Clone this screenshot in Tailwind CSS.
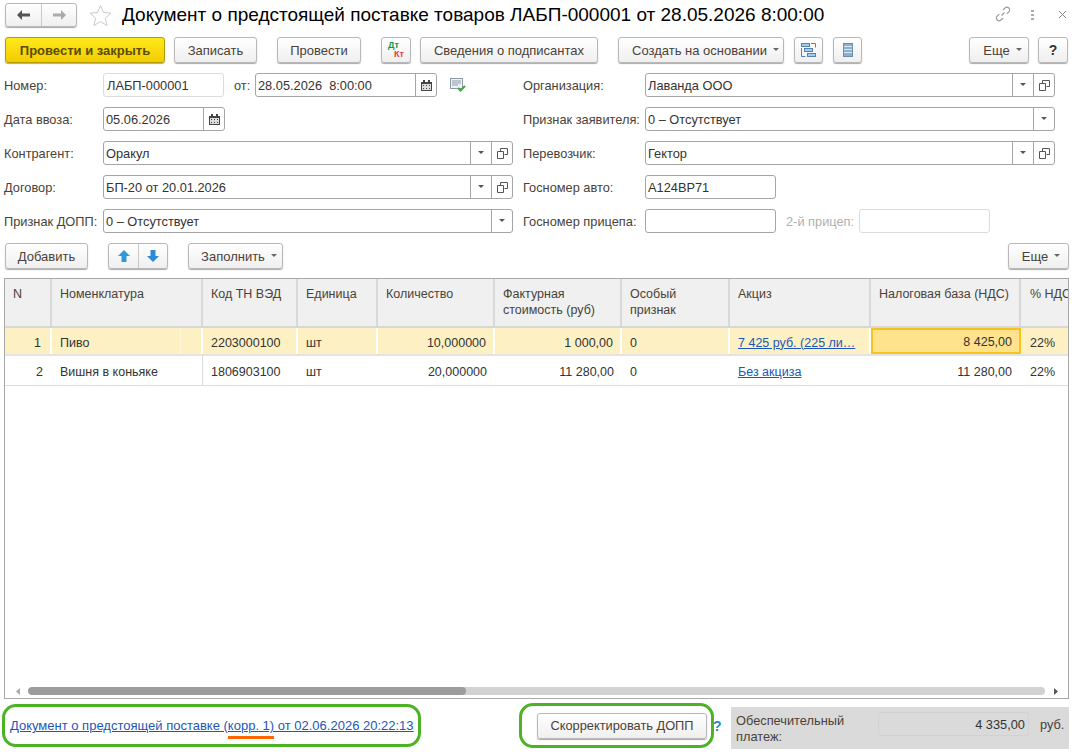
<!DOCTYPE html>
<html lang="ru">
<head>
  <meta charset="UTF-8" />
  <title>Документ о предстоящей поставке товаров</title>
  <script src="https://cdn.jsdelivr.net/npm/@tailwindcss/browser@4"></script>
</head>
<body class="bg-white">
<div class="w-[1082px] h-[756px] overflow-hidden flex flex-col font-['Liberation_Sans',Arial,sans-serif] text-[13px] leading-[15px] text-[#4a4238]">

  <!-- Title bar -->
  <div class="h-[37px] pt-[3px] pl-[5px] flex items-start shrink-0">
    <div class="w-[72px] h-[24px] flex rounded-[3px] border border-[#b8b8b8] bg-linear-to-b from-white to-[#efefef] shadow-[0_1px_1px_#aaa]">
      <div class="w-[36px] flex items-center justify-center border-r border-[#c8c8c8]">
        <svg width="15" height="12" viewBox="0 0 15 12"><path d="M1 6l5-5v3.500h8v3H6V11z" fill="#555"/></svg>
      </div>
      <div class="flex-1 flex items-center justify-center">
        <svg width="15" height="12" viewBox="0 0 15 12"><path d="M14 6L9 1v3.500H1v3h8V11z" fill="#aaa"/></svg>
      </div>
    </div>
    <svg class="ml-[12px] mt-[1px]" width="23" height="23" viewBox="0 0 23 23"><path d="M11.500 1.500l3 7 7.500.7-5.700 5 1.800 7.300-6.600-3.900-6.600 3.900 1.800-7.300-5.700-5 7.500-.7z" fill="none" stroke="#c9c9c9"/></svg>
    <div class="ml-[10px] text-[19px] leading-[24px] text-black whitespace-nowrap">Документ о предстоящей поставке товаров ЛАБП-000001 от 28.05.2026 8:00:00</div>
    <div class="flex-1"></div>
    <svg class="mt-[3px]" width="16" height="16" viewBox="0 0 16 16"><g fill="none" stroke="#999" stroke-width="1.100"><path d="M6.500 9.500l3-3"/><path d="M8 4l2-2a2.600 2.600 0 0 1 3.800 3.800l-2 2"/><path d="M8 12l-2 2a2.600 2.600 0 0 1-3.800-3.800l2-2"/></g></svg>
    <div class="ml-[20px] mt-[7px] w-[3px] flex flex-col gap-[2px]">
      <div class="h-[2px] bg-[#aaa]"></div><div class="h-[2px] bg-[#aaa]"></div><div class="h-[2px] bg-[#aaa]"></div>
    </div>
    <svg class="ml-[24px] mr-[15px] mt-[7px]" width="9" height="9" viewBox="0 0 9 9"><path d="M1 1l7 7M8 1L1 8" stroke="#888" stroke-width="1"/></svg>
  </div>

  <!-- Command bar -->
  <div class="h-[36px] pl-[5px] flex items-start shrink-0">
    <div class="w-[160px] h-[26px] flex items-center justify-center rounded-[3px] border border-[#b39b00] bg-linear-to-b from-[#ffe81a] to-[#f2cd00] shadow-[0_1px_1px_#aaa] font-bold text-[#5b4c00]">Провести и закрыть</div>
    <div class="ml-[9px] w-[83px] h-[26px] flex items-center justify-center rounded-[3px] border border-[#b8b8b8] bg-linear-to-b from-white to-[#efefef] shadow-[0_1px_1px_#aaa]">Записать</div>
    <div class="ml-[20px] w-[84px] h-[26px] flex items-center justify-center rounded-[3px] border border-[#b8b8b8] bg-linear-to-b from-white to-[#efefef] shadow-[0_1px_1px_#aaa]">Провести</div>
    <div class="ml-[20px] w-[30px] h-[26px] relative rounded-[3px] border border-[#b8b8b8] bg-linear-to-b from-white to-[#efefef] shadow-[0_1px_1px_#aaa] font-bold text-[9px] leading-[9px]">
      <span class="absolute left-[6px] top-[3px] text-[#0a9a4a]">Дт</span>
      <span class="absolute left-[12px] top-[12px] text-[#e8383c]">Кт</span>
    </div>
    <div class="ml-[9px] w-[178px] h-[26px] flex items-center justify-center rounded-[3px] border border-[#b8b8b8] bg-linear-to-b from-white to-[#efefef] shadow-[0_1px_1px_#aaa]">Сведения о подписантах</div>
    <div class="ml-[20px] w-[166px] h-[26px] pl-[10px] flex items-center justify-center gap-[6px] rounded-[3px] border border-[#b8b8b8] bg-linear-to-b from-white to-[#efefef] shadow-[0_1px_1px_#aaa]">Создать на основании
      <svg width="7" height="4" viewBox="0 0 7 4"><path d="M0 0h6L3 3z" fill="#666"/></svg>
    </div>
    <div class="ml-[10px] w-[29px] h-[26px] flex items-center justify-center rounded-[3px] border border-[#b8b8b8] bg-linear-to-b from-white to-[#efefef] shadow-[0_1px_1px_#aaa]">
      <svg width="15" height="15" viewBox="0 0 15 15"><g fill="#a9c9e4" stroke="#4f86b3"><rect x=".5" y=".5" width="8" height="3"/><rect x="3.500" y="5.500" width="8" height="3"/><rect x="6.500" y="10.500" width="8" height="3"/></g><path d="M10 .5h4.500v4M.5 5v8.500h4" fill="none" stroke="#4f86b3"/></svg>
    </div>
    <div class="ml-[10px] w-[29px] h-[26px] flex items-center justify-center rounded-[3px] border border-[#b8b8b8] bg-linear-to-b from-white to-[#efefef] shadow-[0_1px_1px_#aaa]">
      <svg width="10" height="14" viewBox="0 0 10 14"><rect x=".5" y=".5" width="9" height="13" fill="#8fb0cc" stroke="#6d8fab"/><path d="M1 3.500h8M1 6.500h8M1 9.500h8" stroke="#dbe7f0"/></svg>
    </div>
    <div class="ml-[107px] w-[60px] h-[26px] pl-[8px] flex items-center justify-center gap-[6px] rounded-[3px] border border-[#b8b8b8] bg-linear-to-b from-white to-[#efefef] shadow-[0_1px_1px_#aaa]">Еще
      <svg width="7" height="4" viewBox="0 0 7 4"><path d="M0 0h6L3 3z" fill="#666"/></svg>
    </div>
    <div class="ml-[9px] w-[30px] h-[26px] flex items-center justify-center rounded-[3px] border border-[#b8b8b8] bg-linear-to-b from-white to-[#efefef] shadow-[0_1px_1px_#aaa] font-bold text-[14px] text-[#333]">?</div>
  </div>

  <!-- Form -->
  <div class="flex flex-col gap-[10px] shrink-0 text-[12.8px]">
    <div class="h-[24px] flex items-center">
      <div class="w-[523px] pl-[4px] flex items-center">
        <div class="w-[99px]">Номер:</div>
        <div class="w-[121px] h-[24px] pl-[3px] flex items-center border border-[#dcdcdc] rounded-[3px] text-[#333]">ЛАБП-000001</div>
        <div class="ml-[10px] w-[21px]">от:</div>
        <div class="w-[182px] h-[24px] flex items-center border border-[#a5a5a5] rounded-[3px] text-[#333]">
          <div class="flex-1 pl-[2px] whitespace-pre">28.05.2026  8:00:00</div>
          <div class="w-[21px] h-full flex items-center justify-center border-l border-[#a5a5a5]">
            <svg width="11" height="11" viewBox="0 0 11 11"><path d="M0 2h11v9H0z" fill="#444"/><path d="M2 0h2v3H2zM7 0h2v3H7z" fill="#444"/><path d="M1 4h9v6H1z" fill="#ddd"/><path d="M2 5h1v1H2zM5 5h1v1H5zM8 5h1v1H8zM2 8h1v1H2zM5 8h1v1H5zM8 8h1v1H8z" fill="#444"/></svg>
          </div>
        </div>
        <svg class="ml-[13px]" width="16" height="14" viewBox="0 0 16 14"><rect x=".5" y=".5" width="12" height="10" fill="#eef2f5" stroke="#8b9ba8"/><path d="M2 3h9M2 5h9M2 7h6" stroke="#8b9ba8"/><path d="M8 10l2.500 2.500L15 8" fill="none" stroke="#3eaa3e" stroke-width="2"/></svg>
      </div>
      <div class="w-[122px]">Организация:</div>
      <div class="w-[410px] h-[24px] flex items-center border border-[#a5a5a5] rounded-[3px] text-[#333]">
        <div class="flex-1 pl-[2px]">Лаванда ООО</div>
        <div class="w-[21px] h-full flex items-center justify-center border-l border-[#a5a5a5]"><svg width="7" height="4" viewBox="0 0 7 4"><path d="M0 0h6L3 3z" fill="#555"/></svg></div>
        <div class="w-[21px] h-full flex items-center justify-center border-l border-[#a5a5a5]"><svg width="11" height="11" viewBox="0 0 11 11"><path d="M3.500 3.500V.5h7v6h-3M.5 3.500h6v7H.5z" fill="none" stroke="#555"/></svg></div>
      </div>
    </div>

    <div class="h-[24px] flex items-center">
      <div class="w-[523px] pl-[4px] flex items-center">
        <div class="w-[99px]">Дата ввоза:</div>
        <div class="w-[122px] h-[24px] flex items-center border border-[#a5a5a5] rounded-[3px] text-[#333]">
          <div class="flex-1 pl-[2px]">05.06.2026</div>
          <div class="w-[21px] h-full flex items-center justify-center border-l border-[#a5a5a5]">
            <svg width="11" height="11" viewBox="0 0 11 11"><path d="M0 2h11v9H0z" fill="#444"/><path d="M2 0h2v3H2zM7 0h2v3H7z" fill="#444"/><path d="M1 4h9v6H1z" fill="#ddd"/><path d="M2 5h1v1H2zM5 5h1v1H5zM8 5h1v1H8zM2 8h1v1H2zM5 8h1v1H5zM8 8h1v1H8z" fill="#444"/></svg>
          </div>
        </div>
      </div>
      <div class="w-[122px] whitespace-nowrap">Признак заявителя:</div>
      <div class="w-[410px] h-[24px] flex items-center border border-[#a5a5a5] rounded-[3px] text-[#333]">
        <div class="flex-1 pl-[2px]">0 – Отсутствует</div>
        <div class="w-[21px] h-full flex items-center justify-center border-l border-[#a5a5a5]"><svg width="7" height="4" viewBox="0 0 7 4"><path d="M0 0h6L3 3z" fill="#555"/></svg></div>
      </div>
    </div>

    <div class="h-[24px] flex items-center">
      <div class="w-[99px] ml-[4px]">Контрагент:</div>
      <div class="w-[410px] h-[24px] flex items-center border border-[#a5a5a5] rounded-[3px] text-[#333]">
        <div class="flex-1 pl-[2px]">Оракул</div>
        <div class="w-[21px] h-full flex items-center justify-center border-l border-[#a5a5a5]"><svg width="7" height="4" viewBox="0 0 7 4"><path d="M0 0h6L3 3z" fill="#555"/></svg></div>
        <div class="w-[21px] h-full flex items-center justify-center border-l border-[#a5a5a5]"><svg width="11" height="11" viewBox="0 0 11 11"><path d="M3.500 3.500V.5h7v6h-3M.5 3.500h6v7H.5z" fill="none" stroke="#555"/></svg></div>
      </div>
      <div class="w-[122px] ml-[10px]">Перевозчик:</div>
      <div class="w-[410px] h-[24px] flex items-center border border-[#a5a5a5] rounded-[3px] text-[#333]">
        <div class="flex-1 pl-[2px]">Гектор</div>
        <div class="w-[21px] h-full flex items-center justify-center border-l border-[#a5a5a5]"><svg width="7" height="4" viewBox="0 0 7 4"><path d="M0 0h6L3 3z" fill="#555"/></svg></div>
        <div class="w-[21px] h-full flex items-center justify-center border-l border-[#a5a5a5]"><svg width="11" height="11" viewBox="0 0 11 11"><path d="M3.500 3.500V.5h7v6h-3M.5 3.500h6v7H.5z" fill="none" stroke="#555"/></svg></div>
      </div>
    </div>

    <div class="h-[24px] flex items-center">
      <div class="w-[99px] ml-[4px]">Договор:</div>
      <div class="w-[410px] h-[24px] flex items-center border border-[#a5a5a5] rounded-[3px] text-[#333]">
        <div class="flex-1 pl-[2px]">БП-20 от 20.01.2026</div>
        <div class="w-[21px] h-full flex items-center justify-center border-l border-[#a5a5a5]"><svg width="7" height="4" viewBox="0 0 7 4"><path d="M0 0h6L3 3z" fill="#555"/></svg></div>
        <div class="w-[21px] h-full flex items-center justify-center border-l border-[#a5a5a5]"><svg width="11" height="11" viewBox="0 0 11 11"><path d="M3.500 3.500V.5h7v6h-3M.5 3.500h6v7H.5z" fill="none" stroke="#555"/></svg></div>
      </div>
      <div class="w-[122px] ml-[10px]">Госномер авто:</div>
      <div class="w-[131px] h-[24px] pl-[2px] flex items-center border border-[#a5a5a5] rounded-[3px] text-[#333]">А124ВР71</div>
    </div>

    <div class="h-[24px] flex items-center">
      <div class="w-[99px] ml-[4px] whitespace-nowrap">Признак ДОПП:</div>
      <div class="w-[410px] h-[24px] flex items-center border border-[#a5a5a5] rounded-[3px] text-[#333]">
        <div class="flex-1 pl-[2px]">0 – Отсутствует</div>
        <div class="w-[21px] h-full flex items-center justify-center border-l border-[#a5a5a5]"><svg width="7" height="4" viewBox="0 0 7 4"><path d="M0 0h6L3 3z" fill="#555"/></svg></div>
      </div>
      <div class="w-[122px] ml-[10px] whitespace-nowrap">Госномер прицепа:</div>
      <div class="w-[131px] h-[24px] border border-[#a5a5a5] rounded-[3px]"></div>
      <div class="w-[73px] ml-[10px] text-[#b0b0b0] whitespace-nowrap">2-й прицеп:</div>
      <div class="w-[131px] h-[24px] border border-[#dcdcdc] rounded-[3px]"></div>
    </div>
  </div>

  <!-- Table toolbar -->
  <div class="mt-[10px] h-[35px] pl-[5px] flex items-start shrink-0">
    <div class="w-[83px] h-[26px] flex items-center justify-center rounded-[3px] border border-[#b8b8b8] bg-linear-to-b from-white to-[#efefef] shadow-[0_1px_1px_#aaa]">Добавить</div>
    <div class="ml-[20px] w-[60px] h-[26px] flex rounded-[3px] border border-[#b8b8b8] bg-linear-to-b from-white to-[#efefef] shadow-[0_1px_1px_#aaa]">
      <div class="w-[30px] flex items-center justify-center border-r border-[#c8c8c8]"><svg width="12" height="12" viewBox="0 0 12 12"><path d="M6 0l6 6H8.500v6h-5V6H0z" fill="#2f9ad6"/></svg></div>
      <div class="flex-1 flex items-center justify-center"><svg width="12" height="12" viewBox="0 0 12 12"><path d="M6 12l6-6H8.500V0h-5v6H0z" fill="#2f8ad6"/></svg></div>
    </div>
    <div class="ml-[20px] w-[95px] h-[26px] pl-[8px] flex items-center justify-center gap-[6px] rounded-[3px] border border-[#b8b8b8] bg-linear-to-b from-white to-[#efefef] shadow-[0_1px_1px_#aaa]">Заполнить
      <svg width="7" height="4" viewBox="0 0 7 4"><path d="M0 0h6L3 3z" fill="#666"/></svg>
    </div>
    <div class="ml-[725px] w-[61px] h-[26px] pl-[6px] flex items-center justify-center gap-[6px] rounded-[3px] border border-[#b8b8b8] bg-linear-to-b from-white to-[#efefef] shadow-[0_1px_1px_#aaa]">Еще
      <svg width="7" height="4" viewBox="0 0 7 4"><path d="M0 0h6L3 3z" fill="#666"/></svg>
    </div>
  </div>

  <!-- Table -->
  <div class="ml-[4px] w-[1065px] h-[421px] shrink-0 border border-[#a8a8a8] flex flex-col overflow-hidden text-[12.5px] text-[#333]">
    <div class="h-[49px] shrink-0 flex bg-[#f0f0f0] border-b-2 border-[#d8d8d8] text-[#4a4238]">
      <div class="w-[47px] pl-[8px] pt-[8px] border-r-2 border-[#d8d8d8]">N</div>
      <div class="w-[151px] pl-[8px] pt-[8px] border-r-2 border-[#d8d8d8]">Номенклатура</div>
      <div class="w-[95px] pl-[8px] pt-[8px] border-r-2 border-[#d8d8d8]">Код ТН ВЭД</div>
      <div class="w-[80px] pl-[8px] pt-[8px] border-r-2 border-[#d8d8d8]">Единица</div>
      <div class="w-[117px] pl-[8px] pt-[8px] border-r-2 border-[#d8d8d8]">Количество</div>
      <div class="w-[127px] pl-[8px] pt-[7px] border-r-2 border-[#d8d8d8] leading-[16px]">Фактурная стоимость (руб)</div>
      <div class="w-[108px] pl-[8px] pt-[7px] border-r-2 border-[#d8d8d8] leading-[16px]">Особый<br>признак</div>
      <div class="w-[141px] pl-[8px] pt-[8px] border-r-2 border-[#d8d8d8]">Акциз</div>
      <div class="w-[150px] pl-[8px] pt-[8px] border-r-2 border-[#d8d8d8] whitespace-nowrap">Налоговая база (НДС)</div>
      <div class="flex-1 pl-[9px] pt-[8px] whitespace-nowrap overflow-hidden">% НДС</div>
    </div>
    <div class="h-[28px] shrink-0 flex items-stretch bg-[#fdf1c4] border-b-2 border-[#e4e4e4]">
      <div class="w-[47px] pr-[9px] pt-[4px] flex items-center justify-end border-r-2 border-white">1</div>
      <div class="w-[129px] pl-[8px] pt-[4px] flex items-center border-r border-[#fef7dc]">Пиво</div>
      <div class="w-[22px] border-r-2 border-white"></div>
      <div class="w-[95px] pl-[8px] pt-[4px] flex items-center border-r-2 border-white">2203000100</div>
      <div class="w-[80px] pl-[8px] pt-[4px] flex items-center border-r-2 border-white">шт</div>
      <div class="w-[117px] pr-[7px] pt-[4px] flex items-center justify-end border-r-2 border-white">10,000000</div>
      <div class="w-[127px] pr-[7px] pt-[4px] flex items-center justify-end border-r-2 border-white">1 000,00</div>
      <div class="w-[108px] pl-[8px] pt-[4px] flex items-center border-r-2 border-white">0</div>
      <div class="w-[141px] pl-[8px] pt-[4px] flex items-center border-r-2 border-white text-[#1c57b8] underline whitespace-nowrap">7 425 руб. (225 ли…</div>
      <div class="w-[150px] pr-[7px] pt-[2px] flex items-center justify-end border-2 border-[#f5c31c] bg-[#ffe28c]">8 425,00</div>
      <div class="flex-1 pl-[9px] pt-[4px] flex items-center">22%</div>
    </div>
    <div class="h-[30px] shrink-0 flex items-stretch border-b border-[#dcdcdc]">
      <div class="w-[47px] pr-[9px] pt-[3px] flex items-center justify-end">2</div>
      <div class="w-[151px] pl-[8px] pt-[3px] flex items-center border-r border-[#dcdcdc]">Вишня в коньяке</div>
      <div class="w-[95px] pl-[8px] pt-[3px] flex items-center">1806903100</div>
      <div class="w-[80px] pl-[8px] pt-[3px] flex items-center">шт</div>
      <div class="w-[117px] pr-[8px] pt-[3px] flex items-center justify-end">20,000000</div>
      <div class="w-[127px] pr-[8px] pt-[3px] flex items-center justify-end">11 280,00</div>
      <div class="w-[108px] pl-[8px] pt-[3px] flex items-center">0</div>
      <div class="w-[141px] pl-[8px] pt-[3px] flex items-center text-[#1c57b8] underline">Без акциза</div>
      <div class="w-[150px] pr-[9px] pt-[3px] flex items-center justify-end">11 280,00</div>
      <div class="flex-1 pl-[9px] pt-[3px] flex items-center">22%</div>
    </div>
    <div class="flex-1"></div>
    <div class="h-[10px] mb-[2px] shrink-0 flex items-center">
      <svg class="ml-[11px]" width="4" height="7" viewBox="0 0 4 7"><path d="M4 0v7L0 3.500z" fill="#aaa"/></svg>
      <div class="ml-[8px] w-[1017px] h-[8px] rounded-[4px] bg-[#d2d2d2] overflow-hidden">
        <div class="w-[438px] h-[8px] rounded-[4px] bg-[#9c9c9c]"></div>
      </div>
      <svg class="ml-[9px]" width="4" height="7" viewBox="0 0 4 7"><path d="M0 0v7l4-3.500z" fill="#555"/></svg>
    </div>
  </div>

  <!-- Footer -->
  <div class="flex items-start shrink-0 pl-[2px] mt-[4px]">
    <div class="mt-[1px] w-[419px] h-[43px] flex items-center pl-[5px] border-[3px] border-[#4cb324] rounded-[14px]">
      <div class="relative text-[#1c57b8] underline whitespace-nowrap">Документ о предстоящей поставке (корр. 1) от 02.06.2026 20:22:13
        <div class="absolute left-[218px] top-[18px] w-[46px] h-[3px] bg-[#ff6600]"></div>
      </div>
    </div>
    <div class="ml-[98px] w-[195px] h-[45px] pl-[15px] flex items-center border-[3px] border-[#4cb324] rounded-[14px]">
      <div class="w-[170px] h-[26px] flex items-center justify-center rounded-[3px] border border-[#b8b8b8] bg-linear-to-b from-white to-[#efefef] shadow-[0_1px_1px_#aaa] text-[12.8px]">Скорректировать ДОПП</div>
    </div>
    <div class="w-[17px] -ml-[1px] mr-[1px] mt-[16px] font-bold text-[14px] text-[#2585c9]">?</div>
    <div class="w-[338px] h-[42px] mt-[4px] bg-[#dadada] flex items-start text-[12.8px]">
      <div class="w-[147px] pl-[5px] pt-[6px] leading-[16px]">Обеспечительный платеж:</div>
      <div class="w-[151px] h-[24px] mt-[5px] pr-[3px] flex items-center justify-end border border-[#d2d2d2] rounded-[3px] text-[#333]">4 335,00</div>
      <div class="ml-[11px] mt-[10px]">руб.</div>
    </div>
  </div>
</div>
</body>
</html>
